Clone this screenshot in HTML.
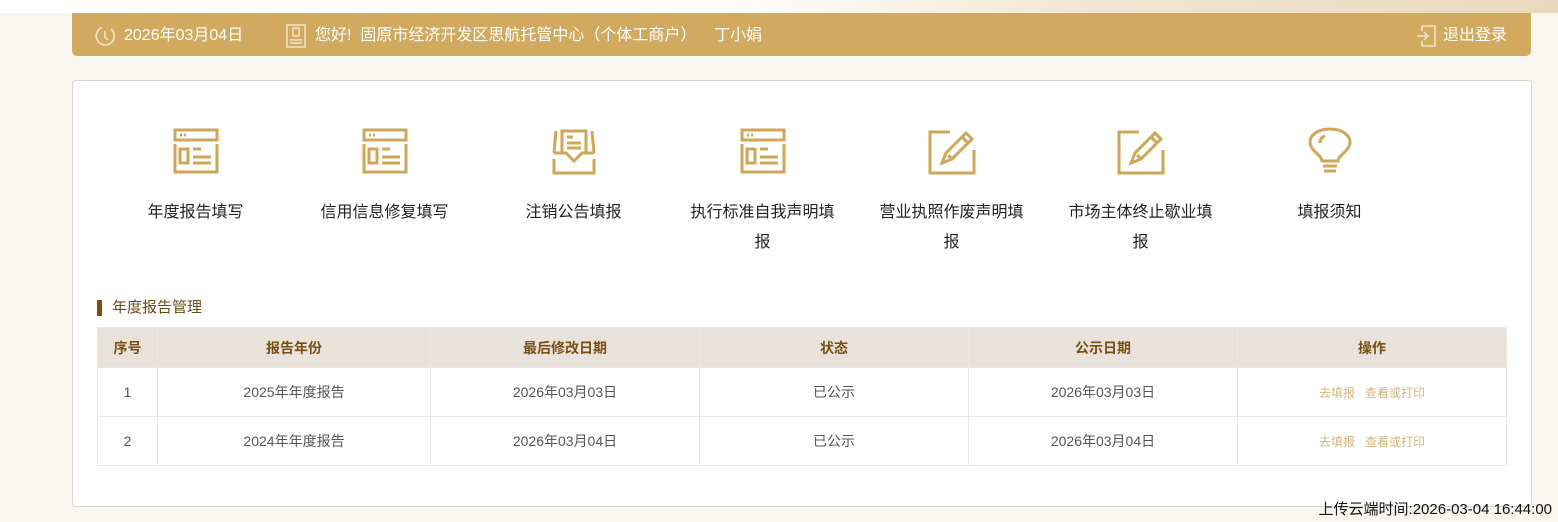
<!DOCTYPE html>
<html><head><meta charset="utf-8"><style>
*{margin:0;padding:0;box-sizing:border-box}
body{width:1558px;height:522px;background:#f9f6f1;font-family:"Liberation Sans","Noto Sans CJK SC",sans-serif;position:relative;overflow:hidden}
.tex{position:absolute;left:0;top:0;width:1558px;height:13px;background:linear-gradient(90deg,#fff 0%,#fff 45%,#f1e6d3 70%,#ead9bd 100%)}
.bar{position:absolute;left:72px;top:13px;width:1459px;height:43px;background:#d1aa5f;border-radius:0 0 5px 5px;color:#fff;font-size:16px}
.bar span{position:absolute;top:13px;line-height:20px;white-space:nowrap}
.card{position:absolute;left:72px;top:80px;width:1460px;height:427px;background:#fff;border:1px solid #d9d6d1;border-radius:4px}
.ic{position:absolute;top:46px;width:189px;text-align:center;font-size:16px;color:#222;line-height:30px}
.ic svg{display:block;margin:0 auto 23px;width:48px;height:48px}
.ic div{width:150px;margin:0 auto}
.st{position:absolute;left:24px;top:219px;font-size:15px;color:#6b4a1a;padding-left:10px;border-left:5px solid #7a4e12;line-height:16px}
table{position:absolute;left:24px;top:246px;border-collapse:collapse;width:1410px;font-size:14px}
td,th{border:1px solid #ebe7e3;text-align:center;color:#555;font-weight:normal}
th{background:#e8e2db;color:#7a4e12;font-weight:bold;height:40px}
td{height:49px}
a{color:#d4b57a;font-size:12px;margin:0 5px;text-decoration:none}
.ft{position:absolute;right:6px;top:498px;font-size:15px;color:#111}
</style></head><body>
<div class="tex"></div>
<div class="bar">
<svg style="position:absolute;left:22px;top:12px" width="22" height="22" viewBox="0 0 22 22" fill="none" stroke="#f3e4c6" stroke-width="1.6"><path d="M8 2.5A9 9 0 1 0 17 4"/><path d="M11 6v6l3 3"/></svg>
<span style="left:52px">2026年03月04日</span>
<svg style="position:absolute;left:214px;top:11px" width="20" height="24" viewBox="0 0 20 24" fill="none" stroke="#f3e4c6" stroke-width="1.5"><rect x="1" y="1" width="18" height="22"/><rect x="7" y="4" width="6" height="8"/><path d="M4 16h12M4 19h12"/></svg>
<span style="left:243px">您好!&nbsp; 固原市经济开发区思航托管中心（个体工商户）&nbsp;&nbsp;&nbsp; 丁小娟</span>
<svg style="position:absolute;left:1344px;top:12px" width="20" height="22" viewBox="0 0 20 22" fill="none" stroke="#f3e4c6" stroke-width="1.6"><path d="M6 6V1h13v20H6v-5"/><path d="M1 11h11M8 7l4 4-4 4"/></svg>
<span style="left:1371px">退出登录</span>
</div>
<div class="card">
<div class="ic" style="left:28px"><svg viewBox="0 0 48 48" fill="none" stroke="#cfa65a" stroke-width="3"><rect x="3" y="3" width="42" height="10"/><path d="M8 8h6" stroke-dasharray="2 2"/><path d="M3 17v28h42V17"/><rect x="8" y="22" width="8" height="14"/><path d="M21 22h8M21 30h18M21 36h18"/></svg><div>年度报告填写</div></div>
<div class="ic" style="left:217px"><svg viewBox="0 0 48 48" fill="none" stroke="#cfa65a" stroke-width="3"><rect x="3" y="3" width="42" height="10"/><path d="M8 8h6" stroke-dasharray="2 2"/><path d="M3 17v28h42V17"/><rect x="8" y="22" width="8" height="14"/><path d="M21 22h8M21 30h18M21 36h18"/></svg><div>信用信息修复填写</div></div>
<div class="ic" style="left:406px"><svg viewBox="0 0 48 48" fill="none" stroke="#cfa65a" stroke-width="3"><path d="M6 4L4 26M42 4l2 22"/><path d="M12 26V4h24v22"/><path d="M17 10h6M17 16h14M17 21h14"/><path d="M4 26h12l8 8 8-8h12"/><path d="M4 32v14h40V32"/></svg><div>注销公告填报</div></div>
<div class="ic" style="left:595px"><svg viewBox="0 0 48 48" fill="none" stroke="#cfa65a" stroke-width="3"><rect x="3" y="3" width="42" height="10"/><path d="M8 8h6" stroke-dasharray="2 2"/><path d="M3 17v28h42V17"/><rect x="8" y="22" width="8" height="14"/><path d="M21 22h8M21 30h18M21 36h18"/></svg><div>执行标准自我声明填报</div></div>
<div class="ic" style="left:784px"><svg viewBox="0 0 48 48" fill="none" stroke="#cfa65a" stroke-width="3"><path d="M22 5H2v41h44V23"/><path d="M14 36l4-10 20-20 6 6-20 20zM34 10l6 6M20 28l4 4"/></svg><div>营业执照作废声明填报</div></div>
<div class="ic" style="left:973px"><svg viewBox="0 0 48 48" fill="none" stroke="#cfa65a" stroke-width="3"><path d="M22 5H2v41h44V23"/><path d="M14 36l4-10 20-20 6 6-20 20zM34 10l6 6M20 28l4 4"/></svg><div>市场主体终止歇业填报</div></div>
<div class="ic" style="left:1162px"><svg viewBox="0 0 48 48" fill="none" stroke="#cfa65a" stroke-width="3"><path d="M16 34c0-6-12-10-12-19C4 8 12 2 24 2s20 6 20 13c0 9-12 13-12 19z"/><path d="M14 16c0-4 2-6 5-7"/><path d="M17 39h14M18 44h12"/></svg><div>填报须知</div></div>
<div class="st">年度报告管理</div>
<table>
<tr><th style="width:60px">序号</th><th style="width:273px">报告年份</th><th style="width:269px">最后修改日期</th><th style="width:269px">状态</th><th style="width:269px">公示日期</th><th>操作</th></tr>
<tr><td>1</td><td>2025年年度报告</td><td>2026年03月03日</td><td>已公示</td><td>2026年03月03日</td><td><a>去填报</a><a>查看或打印</a></td></tr>
<tr><td>2</td><td>2024年年度报告</td><td>2026年03月04日</td><td>已公示</td><td>2026年03月04日</td><td><a>去填报</a><a>查看或打印</a></td></tr>
</table>
</div>
<div class="ft">上传云端时间:2026-03-04 16:44:00</div>
</body></html>
